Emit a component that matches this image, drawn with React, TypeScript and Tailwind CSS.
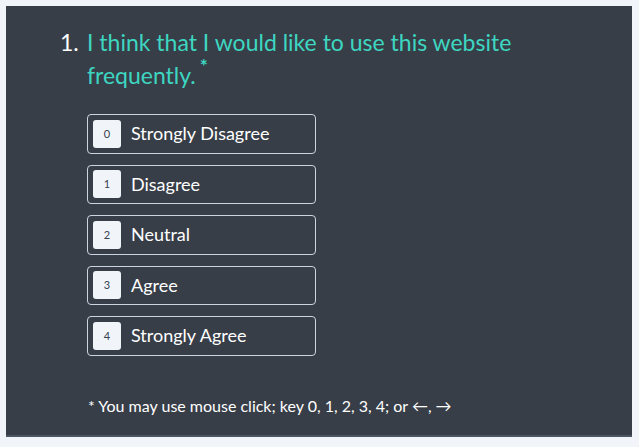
import React from "react";

const options = [
  { key: "0", label: "Strongly Disagree" },
  { key: "1", label: "Disagree" },
  { key: "2", label: "Neutral" },
  { key: "3", label: "Agree" },
  { key: "4", label: "Strongly Agree" },
];

export default function App() {
  return (
    <div
      className="min-h-[447px] w-[639px] bg-[#f1f5f9] p-[6px] pr-[7px] pb-[10px]"
      style={{ fontFamily: "Lato, 'Open Sans', sans-serif" }}
    >
      <div className="h-[431px] border-b-2 border-[#4b5563] bg-[#383e48] pl-[54px] pt-[20px]">
        <div className="flex text-[23px] leading-[33px]">
          <span className="w-[27px] text-white">1.</span>
          <h1 className="w-[450px] text-[#3dd6c1]">
            I think that I would like to use this website frequently.
            <span className="relative -top-[11px] ml-[4px] text-[19px] font-bold">*</span>
          </h1>
        </div>
        <div className="mt-[21px] ml-[27px] flex flex-col gap-[11px]">
          {options.map((o) => (
            <button
              key={o.key}
              type="button"
              className="flex h-[39.5px] w-[229px] items-center gap-[10px] rounded-[4px] border border-[#cbd5e1] px-[5px] text-left"
            >
              <span className="flex h-[28px] w-[28px] items-center justify-center rounded-[3px] bg-[#f1f5f9] text-[11px] text-[#374151]">
                {o.key}
              </span>
              <span className="text-[18px] text-white">{o.label}</span>
            </button>
          ))}
        </div>
        <p className="mt-[38px] ml-[28px] text-[16px] text-white">
          * You may use mouse click; key 0, 1, 2, 3, 4; or ←, →
        </p>
      </div>
    </div>
  );
}
